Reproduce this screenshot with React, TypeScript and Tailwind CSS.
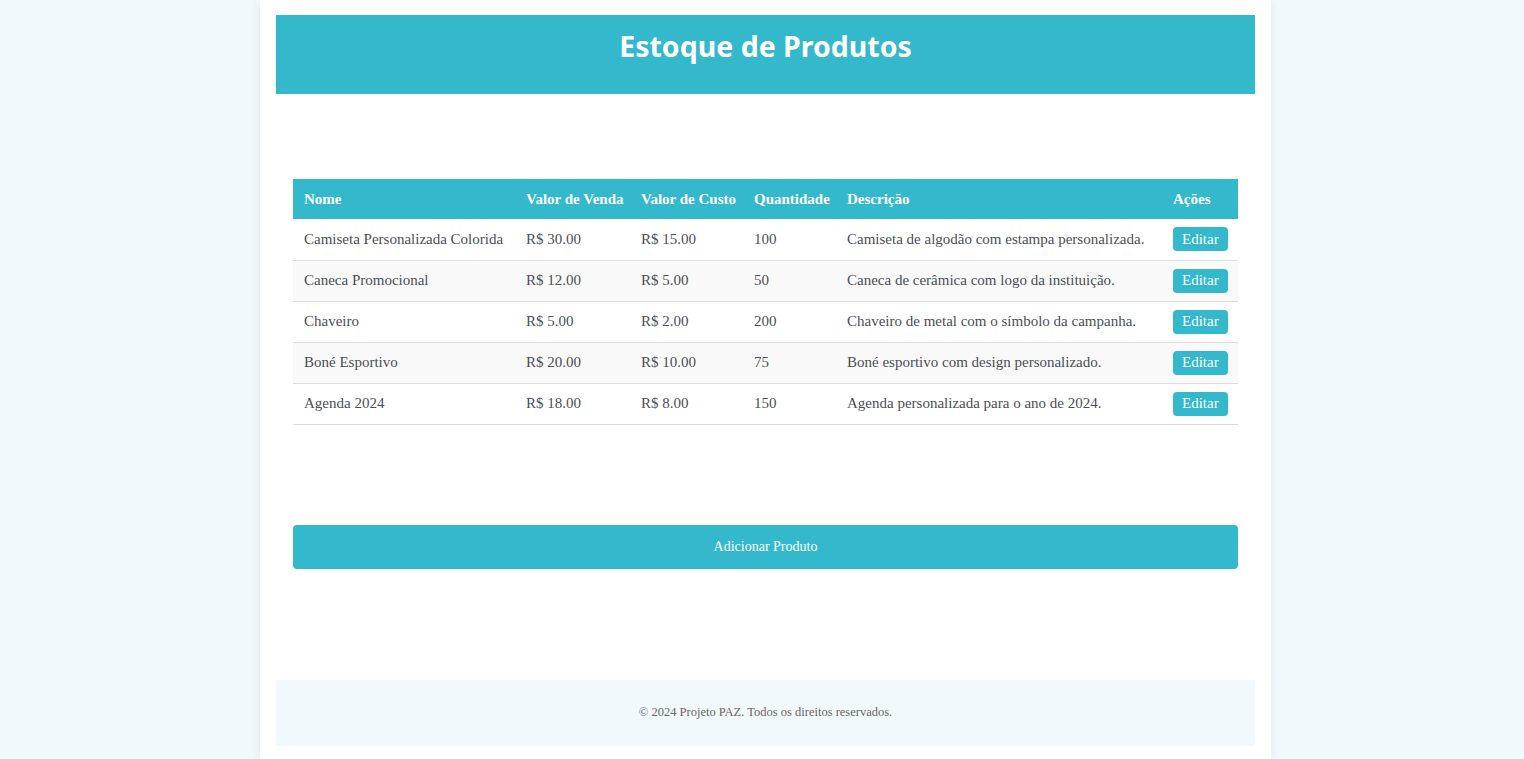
import React from 'react';

interface Produto {
  nome: string;
  venda: string;
  custo: string;
  quantidade: number;
  descricao: string;
}

const produtos: Produto[] = [
  { nome: 'Camiseta Personalizada Colorida', venda: 'R$ 30.00', custo: 'R$ 15.00', quantidade: 100, descricao: 'Camiseta de algodão com estampa personalizada.' },
  { nome: 'Caneca Promocional', venda: 'R$ 12.00', custo: 'R$ 5.00', quantidade: 50, descricao: 'Caneca de cerâmica com logo da instituição.' },
  { nome: 'Chaveiro', venda: 'R$ 5.00', custo: 'R$ 2.00', quantidade: 200, descricao: 'Chaveiro de metal com o símbolo da campanha.' },
  { nome: 'Boné Esportivo', venda: 'R$ 20.00', custo: 'R$ 10.00', quantidade: 75, descricao: 'Boné esportivo com design personalizado.' },
  { nome: 'Agenda 2024', venda: 'R$ 18.00', custo: 'R$ 8.00', quantidade: 150, descricao: 'Agenda personalizada para o ano de 2024.' },
];

const App: React.FC = () => {
  return (
    <div className="min-h-screen bg-[#f2f9fc] font-['Liberation_Serif',serif]">
      <div className="ml-[260px] w-[1011px] min-h-[759px] bg-white px-4 pt-[15px] shadow-[0_0_10px_rgba(0,0,0,0.08)]">
        <header className="flex h-[79px] items-center justify-center bg-[#33b8cc]">
          <h1 className="-mt-[16px] font-['Noto_Sans',sans-serif] text-[28.5px] font-bold text-white">Estoque de Produtos</h1>
        </header>

        <main className="px-[17px] pt-[85px]">
          <table className="w-full table-fixed border-collapse text-[15px] text-[#4a4f55]">
            <colgroup>
              <col className="w-[222px]" />
              <col className="w-[115px]" />
              <col className="w-[113px]" />
              <col className="w-[93px]" />
              <col className="w-[326px]" />
              <col />
            </colgroup>
            <thead>
              <tr className="h-[40px] bg-[#33b8cc] text-left text-white">
                <th className="whitespace-nowrap px-[11px] font-bold">Nome</th>
                <th className="whitespace-nowrap px-[11px] font-bold">Valor de Venda</th>
                <th className="whitespace-nowrap px-[11px] font-bold">Valor de Custo</th>
                <th className="whitespace-nowrap px-[11px] font-bold">Quantidade</th>
                <th className="whitespace-nowrap px-[11px] font-bold">Descrição</th>
                <th className="whitespace-nowrap px-[11px] font-bold">Ações</th>
              </tr>
            </thead>
            <tbody>
              {produtos.map((p, i) => (
                <tr key={p.nome} className={`h-[41px] border-b border-[#dddddd] ${i % 2 === 1 ? 'bg-[#f9f9f9]' : 'bg-white'}`}>
                  <td className="whitespace-nowrap px-[11px]">{p.nome}</td>
                  <td className="px-[11px]">{p.venda}</td>
                  <td className="px-[11px]">{p.custo}</td>
                  <td className="px-[11px]">{p.quantidade}</td>
                  <td className="whitespace-nowrap px-[11px]">{p.descricao}</td>
                  <td className="px-[11px]">
                    <button className="h-[24px] rounded-[4px] bg-[#33b8cc] px-[9px] text-[15px] text-white">Editar</button>
                  </td>
                </tr>
              ))}
            </tbody>
          </table>

          <button className="mt-[100px] h-[44px] w-full rounded-[4px] bg-[#33b8cc] text-[14px] text-white">
            Adicionar Produto
          </button>
        </main>

        <footer className="mt-[111px] flex h-[66px] items-center justify-center bg-[#f2f9fc] text-[12.5px] text-[#666]">
          © 2024 Projeto PAZ. Todos os direitos reservados.
        </footer>
      </div>
    </div>
  );
};

export default App;
